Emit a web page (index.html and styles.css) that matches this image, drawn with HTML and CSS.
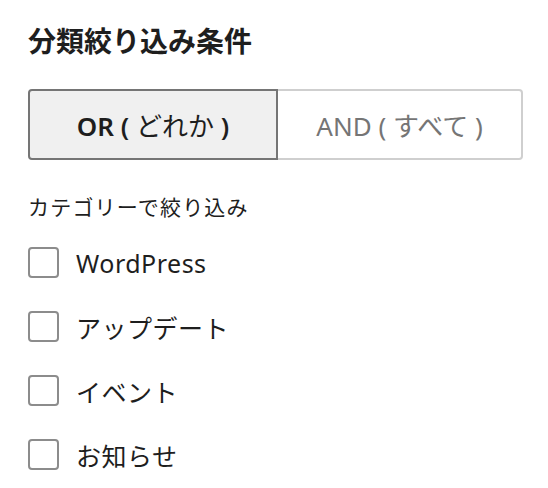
FILE: index.html
```html
<!DOCTYPE html>
<html lang="ja">
<head>
    <meta charset="UTF-8">
    <meta name="viewport" content="width=device-width, initial-scale=1.0">
    <title>分類絞り込み条件</title>
    <link rel="stylesheet" href="styles.css">
</head>
<body>
    <div class="filter-panel">
        <h2 class="filter-title">分類絞り込み条件</h2>

        <div class="mode-toggle">
            <button class="mode-btn active" type="button">OR ( <span class="jp">どれか</span> )</button>
            <button class="mode-btn" type="button">AND ( すべて )</button>
        </div>

        <p class="filter-label">カテゴリーで絞り込み</p>

        <ul class="term-list">
            <li><label class="term"><input type="checkbox"><span class="box"></span>WordPress</label></li>
            <li><label class="term"><input type="checkbox"><span class="box"></span>アップデート</label></li>
            <li><label class="term"><input type="checkbox"><span class="box"></span>イベント</label></li>
            <li><label class="term"><input type="checkbox"><span class="box"></span>お知らせ</label></li>
        </ul>
    </div>
</body>
</html>
```

FILE: styles.css
```css
body {
    margin: 0;
    background-color: #fff;
    color: #1e1e1e;
    font-family: "Noto Sans", "Noto Sans CJK JP", sans-serif;
}

.filter-panel {
    padding: 21px 25px 0 28px;
}

.filter-title {
    margin: 0;
    font-size: 28px;
    font-weight: 700;
    line-height: 40px;
}

.mode-toggle {
    display: flex;
    margin-top: 28px;
}

.mode-btn {
    flex: 1;
    height: 71px;
    padding: 0;
    font-family: inherit;
    font-size: 26px;
    color: #757575;
    background-color: #fff;
    border: 2px solid #cfcfcf;
    border-left: none;
    border-radius: 0 4px 4px 0;
    cursor: pointer;
}

.mode-btn.active {
    flex: 0 0 250px;
    color: #1e1e1e;
    font-weight: 600;
    background-color: #f0f0f0;
    border: 2px solid #757575;
    border-radius: 4px 0 0 4px;
}

.mode-btn .jp {
    font-weight: 400;
}

.filter-label {
    margin: 34px 0 0;
    font-size: 21px;
    letter-spacing: 1.2px;
    line-height: 26px;
}

.term-list {
    list-style: none;
    margin: 27px 0 0;
    padding: 0;
}

.term-list li {
    height: 64px;
}

.term {
    display: flex;
    align-items: center;
    gap: 17px;
    height: 31px;
    font-size: 25px;
    letter-spacing: 0.5px;
    cursor: pointer;
}

.term input {
    display: none;
}

.box {
    width: 27px;
    height: 27px;
    flex: none;
    border: 2px solid #8c8c8c;
    border-radius: 4px;
}

.term input:checked + .box {
    background-color: #1e1e1e;
    border-color: #1e1e1e;
}
```
